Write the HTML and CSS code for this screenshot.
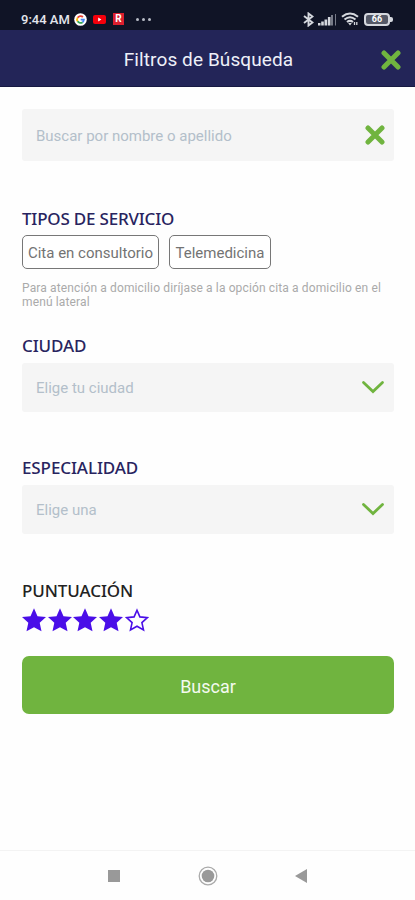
FILE: index.html
```
<!DOCTYPE html>
<html lang="es">
<head>
  <meta charset="UTF-8" />
  <title>Filtros de Búsqueda</title>
  <meta name="viewport" content="width=device-width, initial-scale=1.0" />
  <link rel="stylesheet" href="styles.css">
</head>
<body>

  <div class="status-bar">
    <span class="time">9:44 AM</span>
    <svg class="google" width="13" height="13" viewBox="0 0 13 13" fill="none" stroke-width="1.8">
      <circle cx="6.5" cy="6.5" r="6.3" fill="#fff" />
      <path d="M8.9 4A3.4 3.4 0 0 0 3.6 4.7" stroke="#ea4335" />
      <path d="M3.6 4.7A3.4 3.4 0 0 0 3.6 8.3" stroke="#fbbc05" />
      <path d="M3.6 8.3A3.4 3.4 0 0 0 8.6 9.2" stroke="#34a853" />
      <path d="M8.6 9.2A3.4 3.4 0 0 0 9.9 6.6H6.7" stroke="#4285f4" />
    </svg>
    <svg class="youtube" width="13" height="9" viewBox="0 0 13 9">
      <rect width="13" height="9" rx="2" fill="#f5000b" />
      <path d="M5.2 2.6v3.8L8.4 4.5z" fill="#fff" />
    </svg>
    <span class="app-badge">R</span>
    <span class="dots"><i></i><i></i><i></i></span>
    <div class="status-icons">
      <svg width="11" height="15" viewBox="0 0 11 15" fill="none" stroke="#d5d8de" stroke-width="1.9">
        <path d="M1 4l8.500 6.500L5.500 13.500V1.500l4 3L1 11" />
      </svg>
      <svg class="signal" width="19" height="13" viewBox="0 0 19 13" fill="#d5d8de">
        <path d="M0 10h2.500v2.500H0zM3.200 8.500h2.600v4H3.200zM6.500 6.500h2.700v6H6.500zM9.900 4h2.600v8.500H9.900z" />
        <path d="M13 2h2v10.500h-2zM17 1h1v11.500h-1z" fill="#777b88" />
      </svg>
      <svg class="wifi" width="18" height="14" viewBox="0 0 18 14" fill="none" stroke="#d5d8de" stroke-width="2.100">
        <path d="M1 4.700Q9-1.700 17 4.700M3.500 7.500Q9 3 14.500 7.500M6 10Q9 7.600 12 10" />
        <path d="M7.200 11h3.600L9 13.400z" fill="#d5d8de" stroke="none" />
        <path d="M13.500 10v3M15.800 10v3" stroke-width="1.300" />
      </svg>
      <div class="battery">66</div>
    </div>
  </div>

  <header class="header">
    <h1>Filtros de Búsqueda</h1>
    <svg class="close" width="20" height="20" viewBox="0 0 20 20">
      <path d="M3 3l14 14M17 3L3 17" />
    </svg>
  </header>

  <main class="filters">
    <div class="field search">
      <span class="search-text">Buscar por nombre o apellido</span>
      <svg class="close" width="20" height="20" viewBox="0 0 20 20">
        <path d="M3 3l14 14M17 3L3 17" />
      </svg>
    </div>

    <section class="services">
      <h2 class="t-services">TIPOS DE SERVICIO</h2>
      <div class="chips">
        <button class="chip chip-office">Cita en consultorio</button>
        <button class="chip chip-tele">Telemedicina</button>
      </div>
      <p class="note">Para atención a domicilio diríjase a la opción cita a domicilio en el<br>menú lateral</p>
    </section>

    <section class="group">
      <h2 class="t-city">CIUDAD</h2>
      <div class="field">
        <span class="city-text">Elige tu ciudad</span>
        <svg class="arrow" width="24" height="16" viewBox="0 0 24 16"><path d="M2.500 2.500l9.500 9L21.500 2.500" /></svg>
      </div>
    </section>

    <section class="group">
      <h2 class="t-specialty">ESPECIALIDAD</h2>
      <div class="field">
        <span class="specialty-text">Elige una</span>
        <svg class="arrow" width="24" height="16" viewBox="0 0 24 16"><path d="M2.500 2.500l9.500 9L21.500 2.500" /></svg>
      </div>
    </section>

    <section class="rating">
      <h2 class="t-rating">PUNTUACIÓN</h2>
      <div class="stars">
        <svg viewBox="0 0 24 24"><path d="M12 .3l3.500 7.900 8.500.8-6.300 5.700 1.800 8.600L12 19.300l-7.500 4 1.800-8.600L0 9l8.500-.8z" /></svg>
        <svg viewBox="0 0 24 24"><path d="M12 .3l3.500 7.900 8.500.8-6.300 5.700 1.800 8.600L12 19.300l-7.500 4 1.800-8.600L0 9l8.500-.8z" /></svg>
        <svg viewBox="0 0 24 24"><path d="M12 .3l3.500 7.900 8.500.8-6.300 5.700 1.800 8.600L12 19.300l-7.500 4 1.800-8.600L0 9l8.500-.8z" /></svg>
        <svg viewBox="0 0 24 24"><path d="M12 .3l3.500 7.900 8.500.8-6.300 5.700 1.800 8.600L12 19.300l-7.500 4 1.800-8.600L0 9l8.500-.8z" /></svg>
        <svg class="empty" viewBox="0 0 24 24"><path d="M12 2.200l2.900 6.700 7.500.8-5.500 4.900 1.600 7.300-6.500-3.700-6.500 3.700 1.600-7.300-5.500-4.900 7.500-.8z" /></svg>
      </div>
    </section>

    <button class="submit">Buscar</button>
  </main>

  <nav class="nav-bar">
    <svg width="14" height="14" viewBox="0 0 14 14"><path d="M1 1h12v12H1z" fill="#999" /></svg>
    <svg width="20" height="20" viewBox="0 0 20 20">
      <circle cx="10" cy="10" r="8.800" fill="none" stroke="#aaa" stroke-width="1.300" />
      <circle cx="10" cy="10" r="6.300" fill="#999" />
    </svg>
    <svg width="14" height="16" viewBox="0 0 14 16"><path d="M13 1v14L1 8z" fill="#999" /></svg>
  </nav>

</body>
</html>
```
FILE: styles.css
```
:root {
  --navy: #232558;
  --green: #70b43f;
  --violet: #4a0ee8;
  --field: #f5f5f5;
}
* {
  box-sizing: border-box;
}
body {
  margin: 0;
  height: 900px;
  display: flex;
  flex-direction: column;
  background: #fefefe;
  font-family: Roboto, sans-serif;
}
svg {
  display: block;
  flex: none;
}
h1, h2, p {
  margin: 0;
}
button {
  font-family: inherit;
}

/* status bar */
.status-bar {
  height: 30px;
  padding: 8px 22px 0 21px;
  display: flex;
  align-items: center;
  background: #101426;
  color: #e4e6ec;
}
.time {
  width: 53px;
  font-size: 13px;
  font-weight: 500;
  white-space: nowrap;
}
.youtube {
  margin-left: 6px;
}
.app-badge {
  width: 11px;
  height: 12px;
  margin-left: 7px;
  background: #dc1f2e;
  color: #fff;
  font-size: 10px;
  font-weight: 700;
  line-height: 12px;
  text-align: center;
}
.dots {
  display: flex;
  gap: 3px;
  margin-left: 12px;
}
.dots i {
  width: 3px;
  height: 3px;
  border-radius: 50%;
  background: #b9bcc6;
}
.status-icons {
  display: flex;
  align-items: center;
  margin-left: auto;
}
.signal {
  margin-left: 4px;
}
.wifi {
  margin-left: 4px;
}
.battery {
  position: relative;
  width: 26px;
  height: 13px;
  margin: 0 3px 0 5px;
  border: 2px solid #d5d8de;
  border-radius: 4px;
  background: #555967;
  color: #fff;
  font-size: 9px;
  font-weight: 700;
  line-height: 9px;
  text-align: center;
}
.battery::after {
  content: "";
  position: absolute;
  top: 2px;
  right: -5px;
  width: 3px;
  height: 5px;
  border-radius: 0 2px 2px 0;
  background: #d5d8de;
}

/* header */
.header {
  height: 57px;
  padding: 4px 14px 0 25px;
  display: flex;
  align-items: center;
  background: var(--navy);
  border-bottom: 1px solid #171942;
}
.header h1 {
  flex: 1;
  padding: 0 0 1px 11px;
  color: #eef0f8;
  font-size: 19px;
  font-weight: 400;
  text-align: center;
  letter-spacing: 0.1px;
}
.close {
  fill: none;
  stroke: var(--green);
  stroke-width: 5;
  stroke-linecap: round;
}

/* filters */
.filters {
  flex: 1;
  padding: 22px 21px 0 22px;
}
.field {
  height: 49px;
  padding: 0 9px 0 14px;
  display: flex;
  align-items: center;
  justify-content: space-between;
  border-radius: 3px;
  background: var(--field);
  color: #b3bfca;
  font-size: 15px;
}
.search {
  height: 52px;
}
.search-text {
  padding-top: 1px;
}
h2 {
  height: 24px;
  color: #28245f;
  font-family: "Noto Sans", sans-serif;
  font-size: 17px;
  font-weight: 500;
  line-height: 24px;
  white-space: nowrap;
  letter-spacing: -0.1px;
}
.t-services {
  letter-spacing: -0.2px;
}
.services {
  height: 127px;
  margin-top: 46px;
}
.chips {
  display: flex;
  gap: 10px;
  margin-top: 4px;
}
.chip {
  height: 34px;
  padding: 1px 0 0;
  border: 1px solid #777;
  border-radius: 5px;
  background: #fff;
  color: #737373;
  font-size: 15px;
}
.chip-office {
  width: 137px;
}
.chip-tele {
  width: 102px;
}
.note {
  margin-top: 12px;
  color: #aaa;
  font-size: 12px;
  line-height: 14px;
  white-space: nowrap;
  letter-spacing: 0.13px;
}
.group {
  height: 122px;
}
.group h2 {
  margin-bottom: 5px;
}
.arrow {
  fill: none;
  stroke: var(--green);
  stroke-width: 2.8;
  stroke-linecap: round;
}
.rating {
  height: 78px;
  padding-top: 1px;
}
.t-rating {
  color: #222;
}
.stars {
  display: flex;
  gap: 1.700px;
  margin-top: 5px;
}
.stars svg {
  width: 24px;
  height: 24px;
  fill: var(--violet);
}
.stars .empty {
  fill: none;
  stroke: var(--violet);
  stroke-width: 1.6;
}
.submit {
  width: 100%;
  height: 58px;
  padding: 2px 0 0;
  border: 0;
  border-radius: 7px;
  background: var(--green);
  color: #f4faef;
  font-size: 18px;
}

/* system navigation */
.nav-bar {
  height: 50px;
  padding: 0 107px;
  display: flex;
  align-items: center;
  justify-content: space-between;
  border-top: 1px solid #f3f3f3;
}
```
